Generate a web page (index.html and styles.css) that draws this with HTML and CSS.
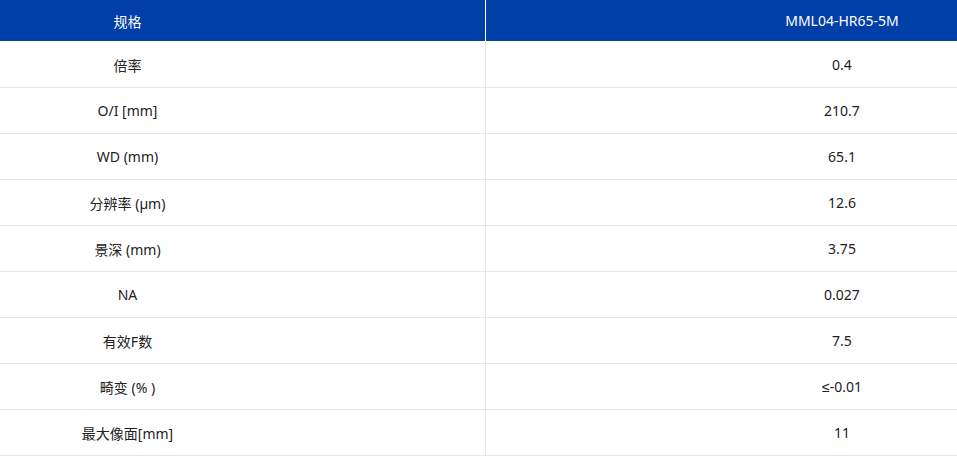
FILE: index.html
```html
<!DOCTYPE html>
<html lang="zh-CN">
<head>
<meta charset="utf-8">
<title>规格</title>
<link rel="stylesheet" href="styles.css">
</head>
<body>
<table class="spec">
  <thead>
    <tr><th class="c1">规格</th><th class="c2">MML04-HR65-5M</th></tr>
  </thead>
  <tbody>
    <tr><td class="c1">倍率</td><td class="c2">0.4</td></tr>
    <tr><td class="c1">O/I [mm]</td><td class="c2">210.7</td></tr>
    <tr><td class="c1">WD (mm)</td><td class="c2">65.1</td></tr>
    <tr><td class="c1">分辨率 (µm)</td><td class="c2">12.6</td></tr>
    <tr><td class="c1">景深 (mm)</td><td class="c2">3.75</td></tr>
    <tr><td class="c1">NA</td><td class="c2">0.027</td></tr>
    <tr><td class="c1">有效F数</td><td class="c2">7.5</td></tr>
    <tr><td class="c1">畸变 (% )</td><td class="c2"><span class="le">≤</span>-0.01</td></tr>
    <tr><td class="c1">最大像面[mm]</td><td class="c2">11</td></tr>
  </tbody>
</table>
</body>
</html>
```
FILE: styles.css
```css
html, body {
  margin: 0;
  padding: 0;
  background: #ffffff;
}
body {
  font-family: "Noto Sans", "Noto Sans CJK SC", sans-serif;
  font-size: 14px;
  color: #222;
}
.spec {
  width: 957px;
  border-collapse: collapse;
  table-layout: fixed;
}
.spec th, .spec td {
  text-align: center;
  padding-top: 0;
  padding-bottom: 0;
  font-weight: normal;
}
.spec th {
  height: 41px;
  background: #003ea8;
  color: #fff;
  border-bottom: 1px solid #ffffff;
}
.spec td {
  height: 45px;
  border-bottom: 1px solid #e8e8e8;
}
.spec .c1 {
  width: 255px;
  padding-left: 0;
  padding-right: 230px;
  border-right: 1px solid #e8e8e8;
}
.spec th.c1 {
  border-right: 1px solid #ffffff;
}
.spec .c2 {
  padding-left: 241px;
  padding-right: 0;
}
.le {
  font-family: "Liberation Sans", sans-serif;
}
```
